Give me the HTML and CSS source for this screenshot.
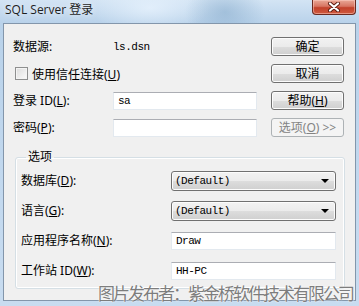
FILE: index.html
```html
<!DOCTYPE html>
<html lang="zh">
<head>
<meta charset="utf-8">
<title>SQL Server 登录</title>
<link rel="stylesheet" href="styles.css">
</head>
<body>
<div class="window">
  <div class="titlebar">
    <span class="title">SQL Server 登录</span>
    <div class="close">
      <svg width="14" height="10" viewBox="0 0 14 10">
        <path d="M3 1.5 L11 8.5 M11 1.5 L3 8.5" stroke="#5a1a10" stroke-width="4" stroke-linecap="round"/>
        <path d="M3 1.5 L11 8.5 M11 1.5 L3 8.5" stroke="#ffffff" stroke-width="2.2" stroke-linecap="round"/>
      </svg>
    </div>
  </div>
  <div class="client">
    <div class="top">
      <div class="label">数据源:</div>
      <div class="value mono">ls.dsn</div>
      <button class="btn">确定</button>

      <div class="check"><span class="box"></span><span>使用信任连接(<u>U</u>)</span></div>
      <button class="btn">取消</button>

      <div class="label">登录 ID(<u>L</u>):</div>
      <div class="input mono">sa</div>
      <button class="btn">帮助(<u>H</u>)</button>

      <div class="label">密码(<u>P</u>):</div>
      <div class="input"></div>
      <button class="btn" disabled>选项(<u>O</u>) &gt;&gt;</button>
    </div>
    <fieldset class="group">
      <legend>选项</legend>
      <div class="opts">
        <div class="label">数据库(<u>D</u>):</div>
        <div class="combo"><span class="mono">(Default)</span><span class="arrow"></span></div>

        <div class="label">语言(<u>G</u>):</div>
        <div class="combo"><span class="mono">(Default)</span><span class="arrow"></span></div>

        <div class="label">应用程序名称(<u>N</u>):</div>
        <div class="input wide mono">Draw</div>

        <div class="label">工作站 ID(<u>W</u>):</div>
        <div class="input wide mono">HH-PC</div>
      </div>
    </fieldset>
  </div>
  <div class="watermark">图片发布者：紫金桥软件技术有限公司</div>
</div>
</body>
</html>
```

FILE: styles.css
```css
html, body {
  margin: 0;
  padding: 0;
  background: #c6dbef;
}

.window {
  position: relative;
  width: 359px;
  height: 306px;
  box-sizing: border-box;
  padding: 0 3px 5px 3px;
  display: flex;
  flex-direction: column;
  background:
    radial-gradient(ellipse 40px 30px at 225px 12px, rgba(120,160,195,0.45), rgba(120,160,195,0) 100%),
    radial-gradient(ellipse 60px 25px at 150px 8px, rgba(235,245,255,0.7), rgba(235,245,255,0) 100%),
    linear-gradient(to bottom, #d3e4f4 0px, #b9d2ea 23px, #c3d9ef 200px, #c8dcf0 306px);
  font-family: "Noto Sans", "Noto Sans CJK SC", sans-serif;
  font-size: 12px;
  color: #000;
  overflow: hidden;
}

.titlebar {
  height: 23px;
  flex: none;
  display: flex;
  align-items: flex-start;
  justify-content: space-between;
}

.title {
  margin-top: 2px;
  margin-left: 2px;
  font-family: "Open Sans", "Noto Sans CJK SC", sans-serif;
  font-size: 12px;
  line-height: 16px;
  color: #1e1e1e;
  text-shadow: 0 0 6px rgba(255,255,255,0.9);
}

.close {
  width: 44px;
  height: 15px;
  box-sizing: border-box;
  border: 1px solid #6a2a20;
  border-top: none;
  border-radius: 0 0 4px 4px;
  background: linear-gradient(to bottom, #e9a897 0%, #d77562 45%, #c2412b 55%, #cf5a3e 100%);
  display: flex;
  align-items: center;
  justify-content: center;
  box-shadow: inset 0 0 0 1px rgba(255,210,200,0.5);
}

.client {
  flex: 1;
  background: #f0f0f0;
  border: 1px solid #8396ab;
  box-sizing: border-box;
  display: flex;
  flex-direction: column;
}

.top {
  display: grid;
  grid-template-columns: 100px 158px 73px;
  grid-auto-rows: 27px;
  align-items: center;
  padding: 9px 0 0 9px;
}

.label {
  white-space: nowrap;
  line-height: 14px;
}

u {
  text-decoration: underline;
  text-underline-offset: 1px;
}

.mono {
  font-family: "Liberation Mono", "DejaVu Sans Mono", monospace;
  font-size: 11px;
  letter-spacing: -0.5px;
}

.value {
  line-height: 14px;
}

.check {
  grid-column: 1 / span 2;
  display: flex;
  align-items: center;
  gap: 4px;
  margin-left: 2px;
  white-space: nowrap;
}

.box {
  width: 11px;
  height: 11px;
  border: 1px solid #8e8f8f;
  background: linear-gradient(135deg, #dcdcdc, #fbfbfb);
  box-shadow: inset 0 0 0 1px #f4f4f4;
}

.input {
  height: 18px;
  box-sizing: border-box;
  width: 144px;
  background: #fff;
  border: 1px solid #e3e9ef;
  border-top-color: #abadb3;
  padding: 0 4px;
  line-height: 16px;
}

.btn {
  width: 73px;
  height: 19px;
  box-sizing: border-box;
  padding: 0;
  border: 1px solid #707070;
  border-radius: 3px;
  background: linear-gradient(to bottom, #f2f2f2 0%, #ebebeb 50%, #dddddd 51%, #cfcfcf 100%);
  box-shadow: inset 0 0 0 1px #fcfcfc;
  font-family: "Noto Sans", "Noto Sans CJK SC", sans-serif;
  font-size: 12px;
  line-height: 15px;
  color: #000;
}

.btn:disabled {
  border-color: #adb2b5;
  background: #f4f4f4;
  color: #838383;
  box-shadow: none;
}

.group {
  margin: 8px 10px 0 11px;
  padding: 0 8px 2px 5px;
  border: 1px solid #d5dfe5;
  border-radius: 3px;
  box-shadow: inset 0 0 0 1px #fff;
  min-width: 0;
}

.group legend {
  padding: 0 2px;
  margin-left: 5px;
  line-height: 16px;
}

.opts {
  display: grid;
  grid-template-columns: 150px 165px;
  grid-auto-rows: 30px;
  align-items: center;
  padding-top: 1px;
}

.combo {
  height: 20px;
  box-sizing: border-box;
  border: 1px solid #707070;
  border-radius: 3px;
  background: linear-gradient(to bottom, #f2f2f2 0%, #ebebeb 50%, #dddddd 51%, #cfcfcf 100%);
  box-shadow: inset 0 0 0 1px #fcfcfc;
  display: flex;
  align-items: center;
  justify-content: space-between;
  padding: 0 6px 0 3px;
}

.arrow {
  width: 0;
  height: 0;
  border-left: 4px solid transparent;
  border-right: 4px solid transparent;
  border-top: 4px solid #000;
}

.input.wide {
  width: 165px;
}

.watermark {
  position: absolute;
  left: 98px;
  top: 283px;
  font-family: "Noto Sans CJK SC", sans-serif;
  font-size: 17px;
  letter-spacing: -2px;
  line-height: 20px;
  color: #7d7d7d;
  white-space: nowrap;
  text-shadow: 0 0 2px #fff, 0 0 1px #fff;
}
```
